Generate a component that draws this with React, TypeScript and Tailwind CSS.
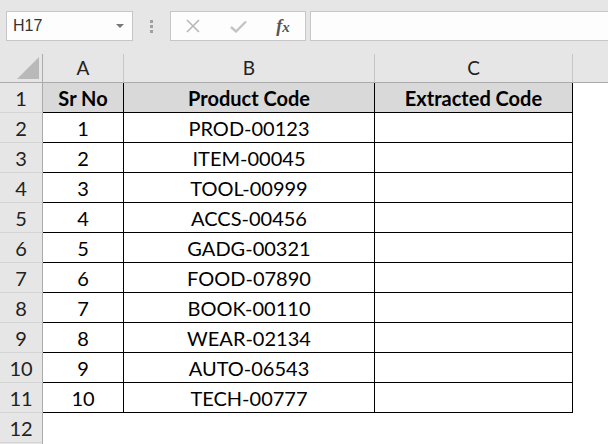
const data: [string, string][] = [
  ['1', 'PROD-00123'],
  ['2', 'ITEM-00045'],
  ['3', 'TOOL-00999'],
  ['4', 'ACCS-00456'],
  ['5', 'GADG-00321'],
  ['6', 'FOOD-07890'],
  ['7', 'BOOK-00110'],
  ['8', 'WEAR-02134'],
  ['9', 'AUTO-06543'],
  ['10', 'TECH-00777'],
]

const font = { fontFamily: 'Lato, "Open Sans", sans-serif' }

function RowHead({ n }: { n?: number }) {
  return (
    <div className="h-[30px] flex items-center justify-center bg-[#e6e6e6] border-r border-b border-r-[#ababab] border-b-[#d4d4d4] text-[20px] text-[#222]">
      {n}
    </div>
  )
}

function Cell({ children, bold, fill }: { children?: React.ReactNode; bold?: boolean; fill?: boolean }) {
  return (
    <div
      className={`h-[30px] flex items-center justify-center border-r border-b border-black text-[20px] text-black ${
        bold ? 'font-bold text-[20.5px]' : ''
      } ${fill ? 'bg-[#d9d9d9]' : 'bg-white'}`}
    >
      {children}
    </div>
  )
}

function Blank() {
  return <div className="h-[30px] bg-white" />
}

export default function App() {
  return (
    <div className="w-[608px] h-[444px] overflow-hidden bg-white" style={font}>
      {/* formula bar */}
      <div className="h-[54px] bg-[#e6e6e6] flex items-start pt-[11px] pl-[6px]">
        <div className="w-[127px] h-[30px] bg-[#fdfdfd] border border-[#c6c6c6] flex items-center pl-[6px] pr-[8px] text-[16px] text-[#333]">
          <span className="flex-1" style={{ fontFamily: '"Liberation Sans", sans-serif' }}>H17</span>
          <svg width="8" height="4" viewBox="0 0 8 4">
            <path d="M0 0 H8 L4 4 Z" fill="#777" />
          </svg>
        </div>
        <div className="w-[37px] h-[30px] flex flex-col items-center justify-center gap-[2px]">
          <span className="w-[3px] h-[3px] bg-[#a0a0a0]" />
          <span className="w-[3px] h-[3px] bg-[#a0a0a0]" />
          <span className="w-[3px] h-[3px] bg-[#a0a0a0]" />
        </div>
        <div className="w-[136px] h-[30px] bg-[#fdfdfd] border border-[#c6c6c6] flex items-center">
          <div className="w-[44px] flex justify-center">
            <svg width="14" height="14" viewBox="0 0 14 14">
              <path d="M1 1 L13 13 M13 1 L1 13" stroke="#b8b8b8" strokeWidth="1.6" />
            </svg>
          </div>
          <div className="w-[46px] flex justify-center">
            <svg width="17" height="13" viewBox="0 0 17 13">
              <path d="M1 7 L6 11.5 L16 1.5" stroke="#c4c4c4" strokeWidth="2.4" fill="none" />
            </svg>
          </div>
          <div className="flex-1 flex justify-center">
            <span className="text-[18px] italic text-[#555] font-bold" style={{ fontFamily: '"Liberation Serif", serif' }}>
              f<span className="text-[15px]">x</span>
            </span>
          </div>
        </div>
        <div className="ml-[4px] flex-1 h-[30px] bg-[#fdfdfd] border border-[#c6c6c6] border-r-0" />
      </div>

      {/* sheet */}
      <div className="grid grid-cols-[43px_81px_251px_198px_1fr]">
        <div className="h-[29px] bg-[#e6e6e6] border-r border-b border-r-[#ababab] border-b-[#ababab] relative">
          <svg className="absolute right-[3px] bottom-[3px]" width="22" height="22" viewBox="0 0 22 22">
            <path d="M22 0 V22 H0 Z" fill="#b9b9b9" />
          </svg>
        </div>
        {['A', 'B', 'C', ''].map((c, i) => (
          <div
            key={i}
            className={`h-[29px] bg-[#e6e6e6] border-b border-b-[#ababab] flex items-center justify-center text-[19px] text-[#222] ${
              i < 3 ? 'border-r border-r-[#c6c6c6]' : ''
            }`}
          >
            {c}
          </div>
        ))}

        <RowHead n={1} />
        <Cell bold fill>Sr No</Cell>
        <Cell bold fill>Product Code</Cell>
        <Cell bold fill>Extracted Code</Cell>
        <Blank />

        {data.map(([n, code], i) => (
          <div key={n} className="contents">
            <RowHead n={i + 2} />
            <Cell>{n}</Cell>
            <Cell>{code}</Cell>
            <Cell />
            <Blank />
          </div>
        ))}

        <RowHead n={12} />
        <Blank />
        <Blank />
        <Blank />
        <Blank />
        <RowHead />
      </div>
    </div>
  )
}
